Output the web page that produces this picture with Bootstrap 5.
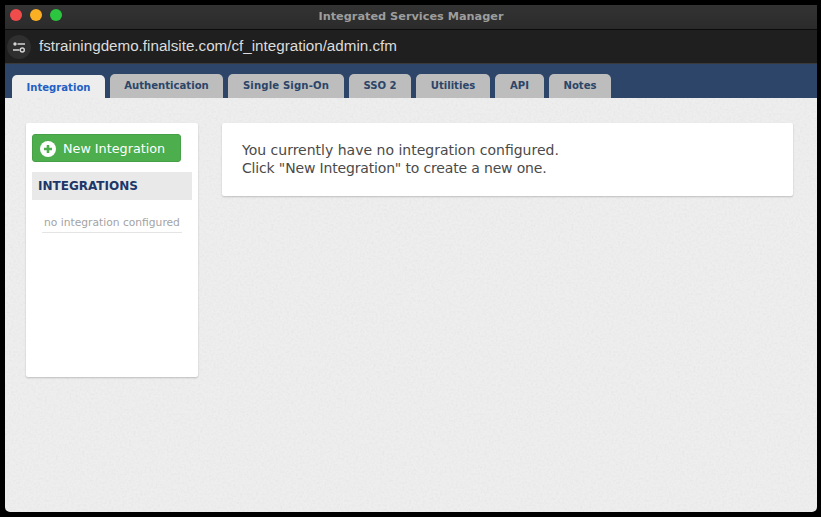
<!DOCTYPE html>
<html lang="en">
<head>
<meta charset="utf-8">
<title>Integrated Services Manager</title>
<link rel="stylesheet" href="https://cdn.jsdelivr.net/npm/bootstrap@5.3.0/dist/css/bootstrap.min.css">
<style>
html,body{height:100%;background:#000;overflow:hidden}
body{padding:5px 4px 5px 5px;font-family:"DejaVu Sans",sans-serif}
.win{height:507px;background:#eeeeee;border-radius:0 0 5px 5px}
.titlebar{height:25px;background:linear-gradient(#333,#2b2b2b);border-bottom:1px solid #0c0c0c;color:#9d9d9d;font-size:11.3px;font-weight:700;position:relative}
.lights{position:absolute;left:5px;top:4px}
.light{width:12px;height:12px;border-radius:50%}
.urlbar{height:34px;background:#1f1f1f;border-bottom:1px solid #3a3a3a;color:#dcdcdc;font-family:"Liberation Sans",sans-serif;font-size:15.2px;padding-left:2px}
.sitebtn{width:24px;height:24px;border-radius:50%;background:#2f2f2f}
.tabbar{height:34px;background:#2c4568;padding-left:7px;gap:5px}
.tabx{height:24px;background:#bdbdbd;color:#2c4568;font-size:10.1px;font-weight:700;border-radius:5px 5px 0 0;white-space:nowrap;text-decoration:none}
.tabx.on{height:23px;width:93px;background:#ededed;color:#2360c4;padding-top:2px;margin-top:1px}
.tw-auth{width:113px}
.tw-sso{width:116px;letter-spacing:.15px}
.tw-two{width:62px}
.tw-util{width:74px}
.tw-api{width:49px}
.tw-notes{width:62px}
.stage{padding:25px 24px 0 21px;gap:24px;background-image:url("data:image/svg+xml,%3Csvg xmlns='http://www.w3.org/2000/svg' width='300' height='300'%3E%3Cfilter id='g'%3E%3CfeTurbulence type='fractalNoise' baseFrequency='.45' numOctaves='3' seed='4'/%3E%3CfeColorMatrix values='0 0 0 0 .55 0 0 0 0 .55 0 0 0 0 .55 .22 .22 0 0 -.18'/%3E%3C/filter%3E%3Crect width='300' height='300' filter='url(%23g)'/%3E%3C/svg%3E")}
.panel{background:#fff;border-radius:2px;box-shadow:0 1px 2px rgba(0,0,0,.2)}
.sidep{width:172px;height:254px;padding:11px 6px 0}
.addbtn{width:149px;height:28px;background:#4cae4c;border:1px solid #46a046;border-radius:3px;color:#fff;font-size:12.75px;padding:1px 0 0 7px;gap:7px}
.addbtn:hover{background:#4cae4c;color:#fff}
.sidehead{height:28px;margin-top:10px;background:#e9e9e9;color:#1c3768;font-size:12px;font-weight:700;padding-left:6px}
.emptyline{margin:13px 10px 0;height:20px;border-bottom:1px solid #e4e4e4;color:#a3a3a3;font-size:10.7px;line-height:20px;text-align:center;white-space:nowrap}
.mainp{width:571px;height:73px;padding:19px 20px;color:#4a4a4a;font-size:14px;line-height:17.5px}
.tight{letter-spacing:-.16px}
</style>
</head>
<body>
<div class="win d-flex flex-column overflow-hidden">
  <div class="titlebar d-flex align-items-center justify-content-center">
    <div class="lights d-flex gap-2">
      <div class="light" style="background:#f04c4c"></div>
      <div class="light" style="background:#fbb024"></div>
      <div class="light" style="background:#2cc53f"></div>
    </div>
    <span>Integrated Services Manager</span>
  </div>
  <div class="urlbar d-flex align-items-center gap-2">
    <div class="sitebtn d-flex align-items-center justify-content-center">
      <svg width="14" height="12" viewBox="0 0 14 12" fill="none" stroke="#d5d5d5" stroke-width="1.4"><circle cx="3" cy="3" r="1.700" fill="#d5d5d5" stroke="none"/><path d="M5.500 3h7.500M1 9h6.500"/><circle cx="10.300" cy="9" r="2"/></svg>
    </div>
    <span>fstrainingdemo.finalsite.com/cf_integration/admin.cfm</span>
  </div>
  <div class="tabbar d-flex align-items-end">
    <a class="tabx on d-flex align-items-center justify-content-center" href="#">Integration</a>
    <a class="tabx tw-auth d-flex align-items-center justify-content-center" href="#">Authentication</a>
    <a class="tabx tw-sso d-flex align-items-center justify-content-center" href="#">Single Sign-On</a>
    <a class="tabx tw-two d-flex align-items-center justify-content-center" href="#">SSO 2</a>
    <a class="tabx tw-util d-flex align-items-center justify-content-center" href="#">Utilities</a>
    <a class="tabx tw-api d-flex align-items-center justify-content-center" href="#">API</a>
    <a class="tabx tw-notes d-flex align-items-center justify-content-center" href="#">Notes</a>
  </div>
  <div class="stage d-flex align-items-start flex-grow-1">
    <div class="panel sidep">
      <button type="button" class="btn addbtn d-flex align-items-center">
        <svg width="16" height="16" viewBox="0 0 16 16"><circle cx="8" cy="8" r="8" fill="#fff"/><path d="M8 4v8M4 8h8" stroke="#4cae4c" stroke-width="2.600"/></svg>
        <span>New Integration</span>
      </button>
      <div class="sidehead d-flex align-items-center">INTEGRATIONS</div>
      <div class="emptyline">no integration configured</div>
    </div>
    <div class="panel mainp">You currently have no integration configured.<br><span class="tight">Click "New Integration" to create a new one.</span></div>
  </div>
</div>
<script src="https://cdn.jsdelivr.net/npm/bootstrap@5.3.0/dist/js/bootstrap.bundle.min.js"></script>
</body>
</html>
